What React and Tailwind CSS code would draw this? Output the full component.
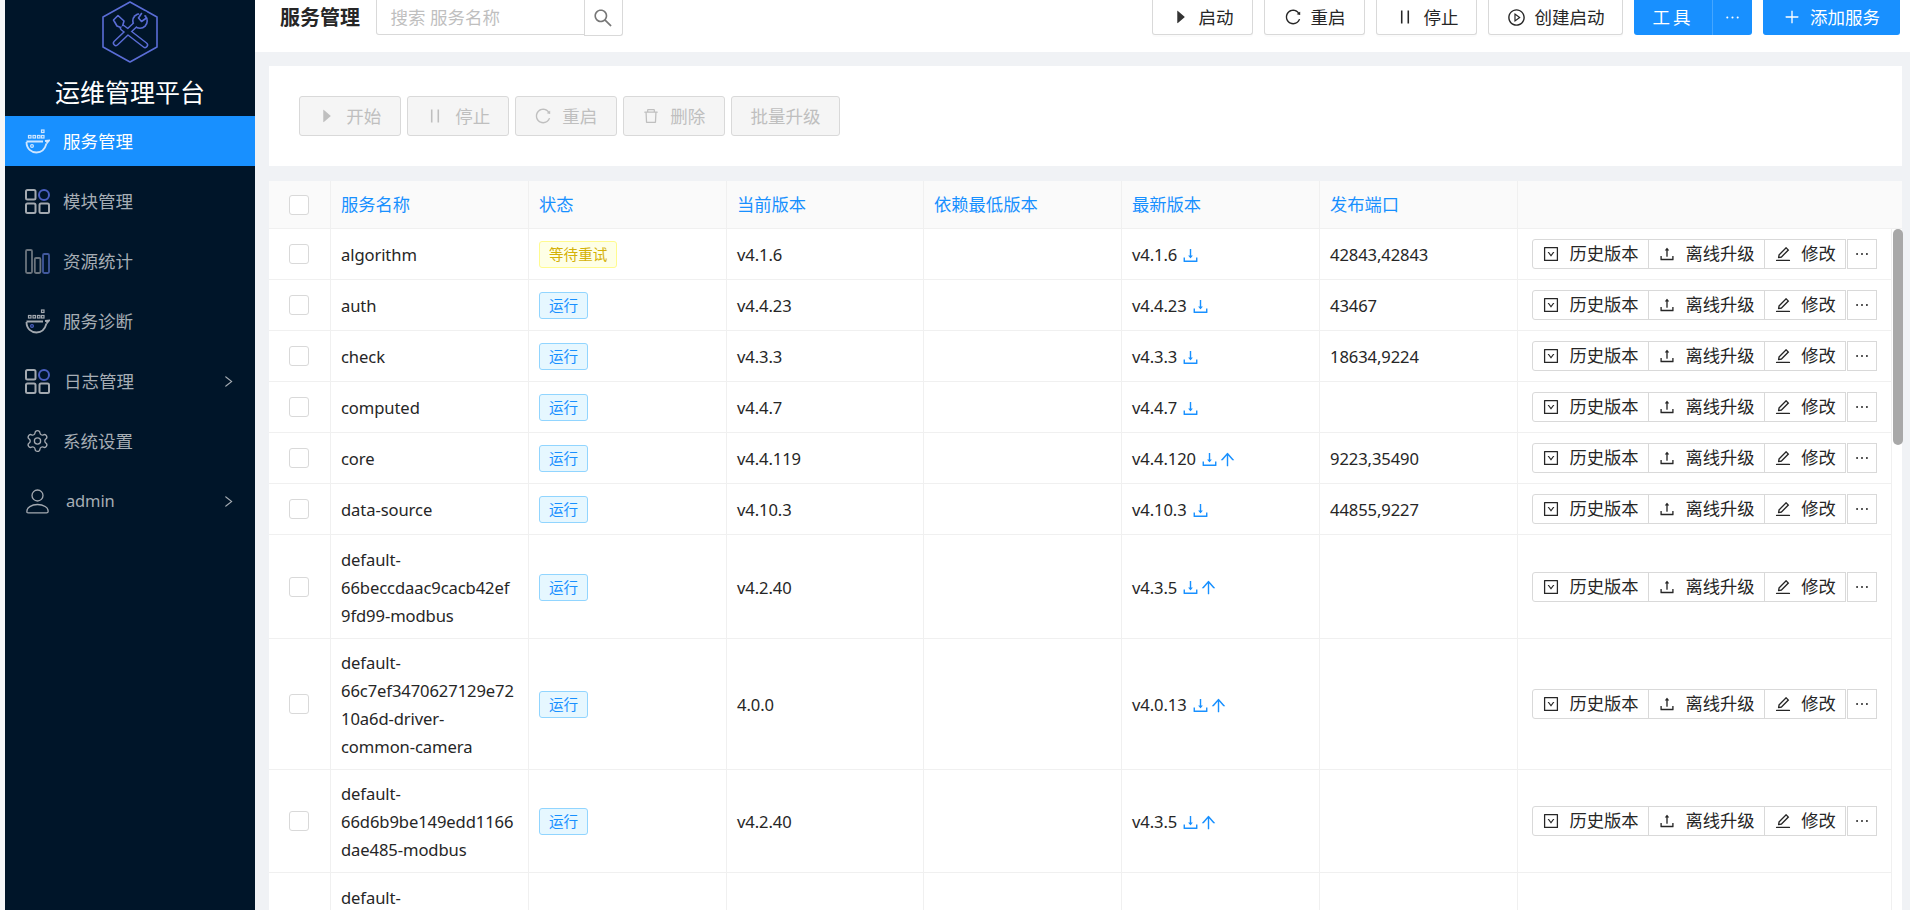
import React from 'react';
import {
    AiOutlineDownSquare, AiOutlineUpload, AiOutlineEdit, AiOutlineEllipsis, AiOutlineDownload,
    AiOutlineArrowUp, AiOutlineSearch, AiOutlinePlus, AiOutlineReload, AiOutlinePlayCircle,
    AiOutlineDelete, AiOutlineRight, AiFillCaretRight, AiOutlinePause,
} from 'react-icons/ai';
import { Settings } from 'lucide-react';

const FONT = 'font-["Noto_Sans","Noto_Sans_CJK_SC",sans-serif]';

const services = [
    { name: 'algorithm', status: 'wait', current: 'v4.1.6', latest: 'v4.1.6', ports: '42843,42843' },
    { name: 'auth', status: 'run', current: 'v4.4.23', latest: 'v4.4.23', ports: '43467' },
    { name: 'check', status: 'run', current: 'v4.3.3', latest: 'v4.3.3', ports: '18634,9224' },
    { name: 'computed', status: 'run', current: 'v4.4.7', latest: 'v4.4.7', ports: '' },
    { name: 'core', status: 'run', current: 'v4.4.119', latest: 'v4.4.120', up: true, ports: '9223,35490' },
    { name: 'data-source', status: 'run', current: 'v4.10.3', latest: 'v4.10.3', ports: '44855,9227' },
    { name: 'default-\n66beccdaac9cacb42ef\n9fd99-modbus', status: 'run', current: 'v4.2.40', latest: 'v4.3.5', up: true, ports: '', h: 'h-[104px]' },
    { name: 'default-\n66c7ef3470627129e72\n10a6d-driver-\ncommon-camera', status: 'run', current: '4.0.0', latest: 'v4.0.13', up: true, ports: '', h: 'h-[131px]' },
    { name: 'default-\n66d6b9be149edd1166\ndae485-modbus', status: 'run', current: 'v4.2.40', latest: 'v4.3.5', up: true, ports: '', h: 'h-[103px]' },
    { name: 'default-\n66d7c1ae149edd1166\ndae4a2-modbus', status: 'run', current: 'v4.2.40', latest: 'v4.3.5', up: true, ports: '', h: 'h-[104px]' },
];

const columns = ['服务名称', '状态', '当前版本', '依赖最低版本', '最新版本', '发布端口'];

const DockerIcon = ({ active }) => {
    const c = active ? '#cfe6ff' : '#a3a9b0';
    return (
        <svg width="25" height="26" viewBox="0 0 25 26" fill="none" stroke={c} strokeWidth="1.2">
            <rect x="3.5" y="7.5" width="2.5" height="2.5" />
            <rect x="8" y="7.5" width="2.5" height="2.5" />
            <rect x="12.5" y="7.5" width="2.5" height="2.5" />
            <rect x="16.5" y="7.5" width="2.5" height="2.5" />
            <rect x="16.5" y="2" width="2.5" height="2.5" />
            <path d="M1.5 13.5 H18 M20 13 l4-.5 -2.5 3" strokeWidth="1.8" />
            <path d="M1.5 14 C1.5 21 6.5 24.5 11.5 24.5 C16.5 24.5 20 21 21.5 15.5" strokeWidth="1.8" />
            <circle cx="7" cy="18" r="1.4" stroke={active ? '#cfe6ff' : '#4a5fc1'} />
        </svg>
    );
};

const ModuleIcon = () => (
    <svg width="25" height="25" viewBox="0 0 25 25" fill="none" stroke="#a3a9b0" strokeWidth="2">
        <rect x="1" y="1" width="9.5" height="9.5" rx="1.5" />
        <circle cx="19" cy="6" r="5" stroke="#4a5fc1" />
        <rect x="1" y="14.5" width="9.5" height="9.5" rx="1.5" />
        <rect x="14.5" y="14.5" width="9.5" height="9.5" rx="1.5" />
    </svg>
);

const StatsIcon = () => (
    <svg width="25" height="25" viewBox="0 0 25 25" fill="none" strokeWidth="1.8">
        <rect x="1" y="1" width="6" height="23" rx="1.2" stroke="#6b747d" />
        <rect x="9.8" y="9" width="5.6" height="15" rx="1.2" stroke="#6b747d" />
        <rect x="18" y="5" width="6" height="19" rx="1.2" stroke="#41589c" />
    </svg>
);

const UserIcon = () => (
    <svg width="25" height="25" viewBox="0 0 25 25" fill="none" stroke="#a3a9b0" strokeWidth="1.3">
        <circle cx="12.5" cy="6.5" r="5.5" />
        <path d="M2 23.5 C1 18.5 7 15.5 12.5 15.5 C18 15.5 24 18.5 23 23 Q23 23.8 21.5 23.8 H3.5 Q2.2 23.8 2 23.5 Z" />
    </svg>
);

const Logo = () => (
    <svg width="56" height="62" viewBox="0 0 56 62" fill="none" className="shrink-0">
        <path d="M28 1 L55 16 V46 L28 61 L1 46 V16 Z" stroke="#5a6dd6" strokeWidth="1.6" strokeLinejoin="round" />
        <g strokeLinecap="round" strokeLinejoin="round">
            <path d="M21 27 L43 44" stroke="#5a6dd6" strokeWidth="6.5" />
            <path d="M14 42 L33 24" stroke="#5a6dd6" strokeWidth="6.5" />
            <circle cx="38" cy="20" r="8" fill="#5a6dd6" />
            <path d="M11.5 19 L16 14.5 L22 20 L20 27 L15 25 Z" stroke="#5a6dd6" strokeWidth="1.6" fill="#001529" />
            <path d="M21 27 L43 44" stroke="#001529" strokeWidth="3.6" />
            <path d="M14 42 L33 24" stroke="#001529" strokeWidth="3.6" />
            <circle cx="38" cy="20" r="6.4" fill="#001529" />
            <path d="M39 19 L45 11 L36 9 Z" fill="#001529" />
            <path d="M39.5 12.5 L36.5 17 L39.5 20.5 L44.5 17" stroke="#5a6dd6" strokeWidth="1.6" />
        </g>
    </svg>
);

const NavItem = ({ icon, label, active, arrow, textClass = 'ml-[13px] text-[17.5px]' }) => (
    <div className={`flex items-center h-[50px] pl-[20px] pr-[19px] ${active ? 'bg-[#1890ff] text-white' : 'text-[#a6adb4]'}`}>
        <span className="w-[25px] h-[26px] flex items-center justify-center">{icon}</span>
        <span className={`${textClass} flex-1`}>{label}</span>
        {arrow && <AiOutlineRight size={15} className="text-[#a6adb4]" />}
    </div>
);

const Sidebar = () => (
    <aside className="w-[250px] shrink-0 h-full bg-[#001529] flex flex-col">
        <div className="flex flex-col items-center h-[116px] pt-[1px]">
            <Logo />
            <div className="mt-[11px] text-white text-[25px] leading-[36px]">运维管理平台</div>
        </div>
        <div className="flex flex-col gap-[10px]">
            <NavItem active icon={<DockerIcon active />} label="服务管理" />
            <NavItem icon={<ModuleIcon />} label="模块管理" />
            <NavItem icon={<StatsIcon />} label="资源统计" />
            <NavItem icon={<DockerIcon />} label="服务诊断" />
            <NavItem icon={<ModuleIcon />} label="日志管理" arrow textClass="ml-[14px] text-[17.5px]" />
            <NavItem icon={<Settings size={26} strokeWidth={1.25} className="text-[#a3a9b0]" />} label="系统设置" />
            <NavItem icon={<UserIcon />} label="admin" arrow textClass="ml-[16px] text-[16.5px] tracking-[-0.15px]" />
        </div>
    </aside>
);

const HeaderButton = ({ icon, children, w, primary }) => (
    <button className={`${w} h-[35px] flex items-center justify-center gap-[9px] text-[17.5px] rounded-b-[3px] border border-t-0 ${primary ? 'bg-[#1890ff] border-[#1890ff] text-white' : 'bg-white border-[#d9d9d9] text-[#262626] shadow-[0_2px_0_rgba(0,0,0,0.015)]'}`}>
        {icon}
        <span>{children}</span>
    </button>
);

const Header = () => (
    <header className="h-[52px] shrink-0 bg-white flex items-start pl-[25px] pr-[10px]">
        <h1 className="w-[95.5px] text-[20px] leading-[35px] font-bold text-[#262626]">服务管理</h1>
        <div className="flex">
            <div className="w-[209px] h-[35px] px-[14px] flex items-center border border-t-0 border-[#d9d9d9] rounded-bl-[3px] text-[17.5px] text-[#bfbfbf]">搜索 服务名称</div>
            <div className="w-[39px] h-[36px] -ml-px flex items-center justify-center border border-t-0 border-[#d9d9d9] rounded-br-[3px] text-[#777]">
                <AiOutlineSearch size={22} />
            </div>
        </div>
        <div className="ml-auto flex gap-[11px]">
            <HeaderButton w="w-[101px]" icon={<AiFillCaretRight size={18} className="text-[#333]" />}>启动</HeaderButton>
            <HeaderButton w="w-[101px]" icon={<AiOutlineReload size={18} />}>重启</HeaderButton>
            <HeaderButton w="w-[101px]" icon={<AiOutlinePause size={20} />}>停止</HeaderButton>
            <HeaderButton w="w-[135px]" icon={<AiOutlinePlayCircle size={19} />}>创建启动</HeaderButton>
            <div className="flex">
                <button className="w-[79px] h-[35px] bg-[#1890ff] text-white text-[17.5px] rounded-bl-[3px] tracking-[3px] border-r border-[#45a6ff]">工具</button>
                <button className="w-[39px] h-[35px] bg-[#1890ff] text-white flex items-center justify-center rounded-br-[3px]"><AiOutlineEllipsis size={19} /></button>
            </div>
            <HeaderButton primary w="w-[137px]" icon={<AiOutlinePlus size={18} />}>添加服务</HeaderButton>
        </div>
    </header>
);

const BulkButton = ({ icon, children, w = 'w-[101.5px]' }) => (
    <button disabled className={`${w} h-[40px] flex items-center justify-center gap-[10px] bg-[#f5f5f5] border border-[#d9d9d9] rounded-[3px] text-[17.5px] text-[#bfbfbf]`}>
        {icon}
        {children && <span>{children}</span>}
    </button>
);

const Checkbox = () => <span className="block w-[20px] h-[20px] mx-auto bg-white border border-[#d9d9d9] rounded-[3px]" />;

const StatusTag = ({ status }) => (
    status === 'wait'
        ? <span className="inline-block h-[27px] leading-[24px] px-[9px] text-[14.6px] rounded-[3px] border border-[#fffb8f] bg-[#feffe6] text-[#d4b106]">等待重试</span>
        : <span className="inline-block h-[27px] leading-[24px] px-[9px] text-[14.6px] rounded-[3px] border border-[#91d5ff] bg-[#e6f7ff] text-[#1890ff]">运行</span>
);

const ActionButton = ({ icon, children, w, cls = '' }) => (
    <button className={`${w} h-[30px] flex items-center justify-center gap-[9px] bg-white border border-[#d9d9d9] text-[17.3px] text-[#262626] ${cls}`}>
        {icon}
        <span>{children}</span>
    </button>
);

const Actions = () => (
    <div className="flex items-center">
        <ActionButton w="w-[117px]" cls="rounded-l-[3px]" icon={<AiOutlineDownSquare size={18} />}>历史版本</ActionButton>
        <ActionButton w="w-[117px]" cls="-ml-px" icon={<AiOutlineUpload size={18} />}>离线升级</ActionButton>
        <ActionButton w="w-[82px]" cls="-ml-px" icon={<AiOutlineEdit size={18} />}>修改</ActionButton>
        <button className="w-[30px] h-[30px] ml-[1px] flex items-center justify-center bg-white border border-[#d9d9d9] text-[#262626]"><AiOutlineEllipsis size={18} /></button>
    </div>
);

const CELL = 'border-r border-b border-[#f0f0f0] px-[10px] align-middle';
const CHECK_CELL = 'border-r border-b border-[#f0f0f0] pl-[9px] pr-[10px] align-middle';
const LATIN = 'text-[16.6px] tracking-[-0.1px] pt-[2px]';

const ServiceTable = () => (
    <table className="w-full table-fixed border-separate border-spacing-0 text-[17.3px] leading-[28px] text-[#262626]">
        <colgroup>
            <col className="w-[62px]" />
            <col className="w-[198px]" />
            <col className="w-[198px]" />
            <col className="w-[197px]" />
            <col className="w-[198px]" />
            <col className="w-[198px]" />
            <col className="w-[198px]" />
            <col />
            <col className="w-[10px]" />
        </colgroup>
        <thead>
            <tr className="h-[48px] bg-[#fafafa]">
                <th className={CHECK_CELL}><Checkbox /></th>
                {columns.map(col => (
                    <th key={col} className={`${CELL} text-left font-normal text-[#1890ff]`}>{col}</th>
                ))}
                <th colSpan={2} className="border-b border-[#f0f0f0]"></th>
            </tr>
        </thead>
        <tbody>
            {services.map(row => (
                <tr key={row.name} className={row.h || 'h-[51px]'}>
                    <td className={CHECK_CELL}><Checkbox /></td>
                    <td className={`${CELL} ${LATIN} whitespace-pre-line`}>{row.name}</td>
                    <td className={CELL}><StatusTag status={row.status} /></td>
                    <td className={`${CELL} ${LATIN}`}>{row.current}</td>
                    <td className={CELL}></td>
                    <td className={`${CELL} ${LATIN}`}>
                        <span className="flex items-center">
                            {row.latest}
                            <AiOutlineDownload size={19} className="ml-[4px] text-[#1890ff]" />
                            {row.up && <AiOutlineArrowUp size={19} className="-ml-[1px] text-[#1890ff]" />}
                        </span>
                    </td>
                    <td className={`${CELL} ${LATIN}`}>{row.ports}</td>
                    <td className="border-r border-b border-[#f0f0f0] pl-[14px] align-middle"><Actions /></td>
                    <td></td>
                </tr>
            ))}
        </tbody>
    </table>
);

export default function App() {
    return (
        <div className={`${FONT} w-screen h-screen overflow-hidden flex bg-[#f5f6f8] pl-[5px]`}>
            <Sidebar />
            <div className="flex-1 min-w-0 h-full flex flex-col bg-[#f0f2f5]">
                <Header />
                <main className="relative flex-1 min-h-0 overflow-hidden pt-[14px] pl-[14px] pr-[8px]">
                    <section className="h-[100px] bg-white px-[30px] pt-[30px] flex gap-[6.5px]">
                        <BulkButton icon={<AiFillCaretRight size={18} />}>开始</BulkButton>
                        <BulkButton icon={<AiOutlinePause size={20} />}>停止</BulkButton>
                        <BulkButton icon={<AiOutlineReload size={18} />}>重启</BulkButton>
                        <BulkButton icon={<AiOutlineDelete size={18} />}>删除</BulkButton>
                        <BulkButton w="w-[109px]">批量升级</BulkButton>
                    </section>
                    <section className="mt-[15px] bg-white">
                        <ServiceTable />
                    </section>
                    <div className="absolute top-[177px] right-[7px] w-[10px] h-[216px] rounded-full bg-[#a8a8a8]" />
                </main>
            </div>
        </div>
    );
}
